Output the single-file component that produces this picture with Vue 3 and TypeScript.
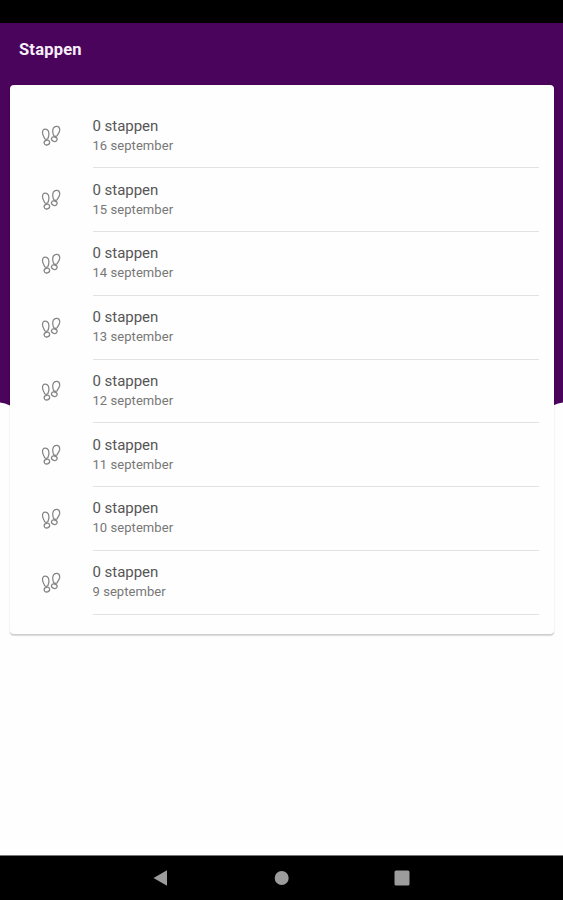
<script setup lang="ts">
interface DayEntry {
  steps: number
  date: string
}

const days: DayEntry[] = [16, 15, 14, 13, 12, 11, 10, 9].map((day) => ({
  steps: 0,
  date: `${day} september`,
}))
</script>

<template>
  <div class="screen">
    <div class="status-bar"></div>
    <main class="content">
      <svg class="backdrop" viewBox="0 0 563 383" preserveAspectRatio="none" aria-hidden="true">
        <path d="M0 0H563V379.5Q558 380 553 382.5H10Q5 380 0 379.5Z" />
      </svg>
      <header class="app-bar">
        <h1 class="title">Stappen</h1>
      </header>
      <section class="card">
        <ul class="list">
          <li v-for="day in days" :key="day.date" class="row">
            <svg class="steps-icon" viewBox="0 0 20 22" aria-hidden="true">
              <path d="M1.5 8C1.3 5.4 2.5 4 4.4 4.2C6.8 4.5 8 6.8 7.9 9.4C7.8 11.4 7.3 12.4 6.7 13.8Q5 15 3.6 13.6C3.3 12 1.7 10.7 1.5 8Z" />
              <ellipse cx="5.9" cy="17.6" rx="2.8" ry="2.3" transform="rotate(-15 5.9 17.6)" />
              <path d="M18.7 5.4C18.9 2.7 17.5 1.1 15.4 1.3C12.8 1.6 11.6 4 11.7 6.6C11.8 8.4 12.1 9.5 12.9 10.9Q14.7 12 16.2 10.8C16.6 9.2 18.4 8.1 18.7 5.4Z" />
              <ellipse cx="13.3" cy="14.2" rx="2.9" ry="2.2" transform="rotate(15 13.3 14.2)" />
            </svg>
            <div class="details">
              <span class="steps">{{ day.steps }} stappen</span>
              <span class="date">{{ day.date }}</span>
            </div>
          </li>
        </ul>
      </section>
    </main>
    <nav class="nav-bar">
      <svg class="nav-icon" viewBox="0 0 16 16"><path d="M.5 8L14 .3V15.7Z" /></svg>
      <svg class="nav-icon" viewBox="0 0 16 16"><circle cx="7.7" cy="8" r="7" /></svg>
      <svg class="nav-icon" viewBox="0 0 16 16"><rect x=".5" y=".5" width="15" height="15" rx="1.5" /></svg>
    </nav>
  </div>
</template>

<style>
body {
  margin: 0;
}
</style>

<style scoped>
.screen {
  display: flex;
  flex-direction: column;
  height: 900px;
  overflow: hidden;
  background: #fefefe;
  font-family: Roboto, "Liberation Sans", sans-serif;
}

.status-bar {
  flex: none;
  height: 22.5px;
  background: #000;
}

.content {
  position: relative;
  flex: 1;
  min-height: 0;
}

.backdrop {
  position: absolute;
  top: 0;
  left: 0;
  width: 100%;
  height: 383px;
  fill: #4a045c;
}

.app-bar {
  position: relative;
  display: flex;
  align-items: center;
  height: 62px;
  padding: 0 19px;
  box-sizing: border-box;
}

.title {
  margin: 0;
  padding-bottom: 8px;
  color: #f8effa;
  font-size: 16.5px;
  font-weight: 700;
  line-height: 20px;
  letter-spacing: 0.2px;
}

.card {
  position: relative;
  height: 549px;
  margin: 0 9.5px;
  padding: 20.2px 15px 0 31px;
  box-sizing: border-box;
  border-radius: 4px;
  background: #fefefe;
  box-shadow: 0 2px 1px rgba(0, 0, 0, 0.12), 0 1px 2px rgba(0, 0, 0, 0.1);
}

.list {
  margin: 0;
  padding: 0;
  list-style: none;
}

.row {
  display: flex;
  align-items: stretch;
  height: 63.75px;
}

.steps-icon {
  flex: none;
  width: 20px;
  height: 22px;
  margin: 20.8px 32px 0 0;
  fill: none;
  stroke: #858585;
  stroke-width: 1.25;
}

.details {
  display: flex;
  flex: 1;
  flex-direction: column;
  padding-top: 11.3px;
  border-bottom: 1px solid #e3e3e3;
}

.steps {
  color: #555;
  font-size: 15px;
  line-height: 20px;
  letter-spacing: -0.03px;
}

.date {
  color: #777;
  font-size: 13px;
  line-height: 20px;
  letter-spacing: 0.06px;
}

.nav-bar {
  display: flex;
  flex: none;
  align-items: center;
  justify-content: center;
  gap: 104.5px;
  height: 45px;
  box-sizing: border-box;
  border-top: 1px solid #777;
  background: #000;
}

.nav-icon {
  width: 16px;
  height: 16px;
  fill: #9c9c9c;
}
</style>
